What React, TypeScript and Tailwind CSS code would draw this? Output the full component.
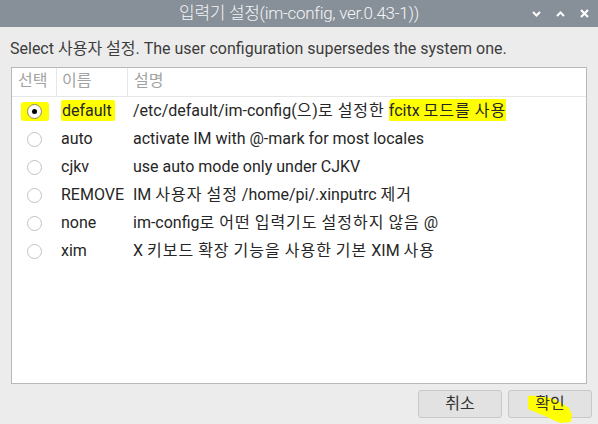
import React from "react";

const rows = [
  { name: "default", desc: "/etc/default/im-config(으)로 설정한 ", mark: "fcitx 모드를 사용", selected: true },
  { name: "auto", desc: "activate IM with @-mark for most locales" },
  { name: "cjkv", desc: "use auto mode only under CJKV" },
  { name: "REMOVE", desc: "IM 사용자 설정 /home/pi/.xinputrc 제거" },
  { name: "none", desc: "im-config로 어떤 입력기도 설정하지 않음 @" },
  { name: "xim", desc: "X 키보드 확장 기능을 사용한 기본 XIM 사용" },
];

// hangul in the source dialog is set a little wider than Noto CJK
const Ko = ({ text }: { text: string }) => (
  <>
    {text.split(/([\uac00-\ud7a3]+)/).map((part, i) =>
      /[\uac00-\ud7a3]/.test(part) ? (
        <span key={i} className="tracking-[1px]">
          {part}
        </span>
      ) : (
        part
      )
    )}
  </>
);

const Radio = ({ on }: { on?: boolean }) => (
  <span
    className={
      "flex h-[15px] w-[15px] items-center justify-center rounded-full border bg-white " +
      (on ? "border-[#8c8c5a]" : "border-[#c2c2c2]")
    }
  >
    {on && <span className="h-[5px] w-[5px] rounded-full bg-black" />}
  </span>
);

const App = () => {
  return (
    <div
      className="flex h-[424px] w-[598px] flex-col bg-[#ececec] text-[#333]"
      style={{ fontFamily: 'Roboto, "Noto Sans CJK KR", sans-serif' }}
    >
      <header className="grid h-[27px] shrink-0 grid-cols-[1fr_auto_1fr] items-center bg-[#878f98] text-white">
        <div />
        <span className="text-[17px] font-light tracking-[-0.3px] text-[#f4f5f6]">
          입력기 설정(im-config, ver.0.43-1))
        </span>
        <div className="flex items-center justify-end gap-[15px] pr-[9px]">
          <svg width="9" height="6" viewBox="0 0 9 6">
            <path d="M1 1 L4.5 4.5 L8 1" stroke="#fff" strokeWidth="2" fill="none" />
          </svg>
          <svg width="9" height="6" viewBox="0 0 9 6">
            <path d="M1 5 L4.5 1.5 L8 5" stroke="#fff" strokeWidth="2" fill="none" />
          </svg>
          <svg width="9" height="9" viewBox="0 0 9 9">
            <path d="M1 1 L8 8 M8 1 L1 8" stroke="#fff" strokeWidth="2.2" fill="none" />
          </svg>
        </div>
      </header>

      <p className="px-[10px] pt-[12px] pb-[8px] text-[16px] leading-[20px] text-[#3c3c3c]">
        Select 사용자 설정. The user configuration supersedes the system one.
      </p>

      <div className="mx-[11px] flex h-[317px] flex-col border border-[#b8b8b8] bg-white">
        <div className="grid h-[29px] grid-cols-[45px_71px_1fr] border-b border-[#e6e6e6] text-[16px] text-[#a2a2a2]">
          <div className="border-r border-[#e6e6e6] pl-[6px] leading-[26px]">선택</div>
          <div className="border-r border-[#e6e6e6] pl-[5px] leading-[26px]">이름</div>
          <div className="pl-[6px] leading-[26px]">설명</div>
        </div>
        {rows.map((r) => (
          <div
            key={r.name}
            className="grid h-[28px] grid-cols-[45px_71px_1fr] items-center text-[16px] text-[#262626]"
          >
            <div className="flex justify-center">
              {r.selected ? (
                <span className="flex h-[19px] w-[28px] items-center justify-center rounded-[3px] bg-[#ffff00]">
                  <Radio on />
                </span>
              ) : (
                <Radio />
              )}
            </div>
            <div className="pl-[4px]">
              {r.selected ? (
                <span className="rounded-[2px] bg-[#ffff00] py-[1px] pr-[3px] pl-[1px]">{r.name}</span>
              ) : (
                r.name
              )}
            </div>
            <div className="whitespace-nowrap pl-[5px]">
              <Ko text={r.desc} />
              {r.mark && (
                <span className="rounded-tl-[4px] bg-[#ffff00] pt-[2px] pb-[1px]">
                  <Ko text={r.mark} />
                </span>
              )}
            </div>
          </div>
        ))}
      </div>

      <div className="flex justify-end gap-[6px] pt-[6px] pr-[6px]">
        <button className="h-[28px] w-[84px] rounded-[3px] border border-[#c8c8c8] bg-[#e2e2e2] text-[16px] text-[#333]">
          취소
        </button>
        <button className="relative h-[28px] w-[84px] rounded-[3px] border border-[#c8c8c8] bg-[#e2e2e2] text-[16px] text-[#333]">
          <svg
            className="pointer-events-none absolute left-[18px] top-[4px] overflow-visible"
            width="46"
            height="28"
            viewBox="0 0 46 28"
          >
            <path
              d="M1 1 C10 0 20 2 27 4 L34 8 L42 13 L45 20 L44 27 L34 28 L26 25 L18 21 L8 17 L1 14 Z"
              fill="#ffff00"
            />
          </svg>
          <span className="relative">확인</span>
        </button>
      </div>
    </div>
  );
};

export default App;
